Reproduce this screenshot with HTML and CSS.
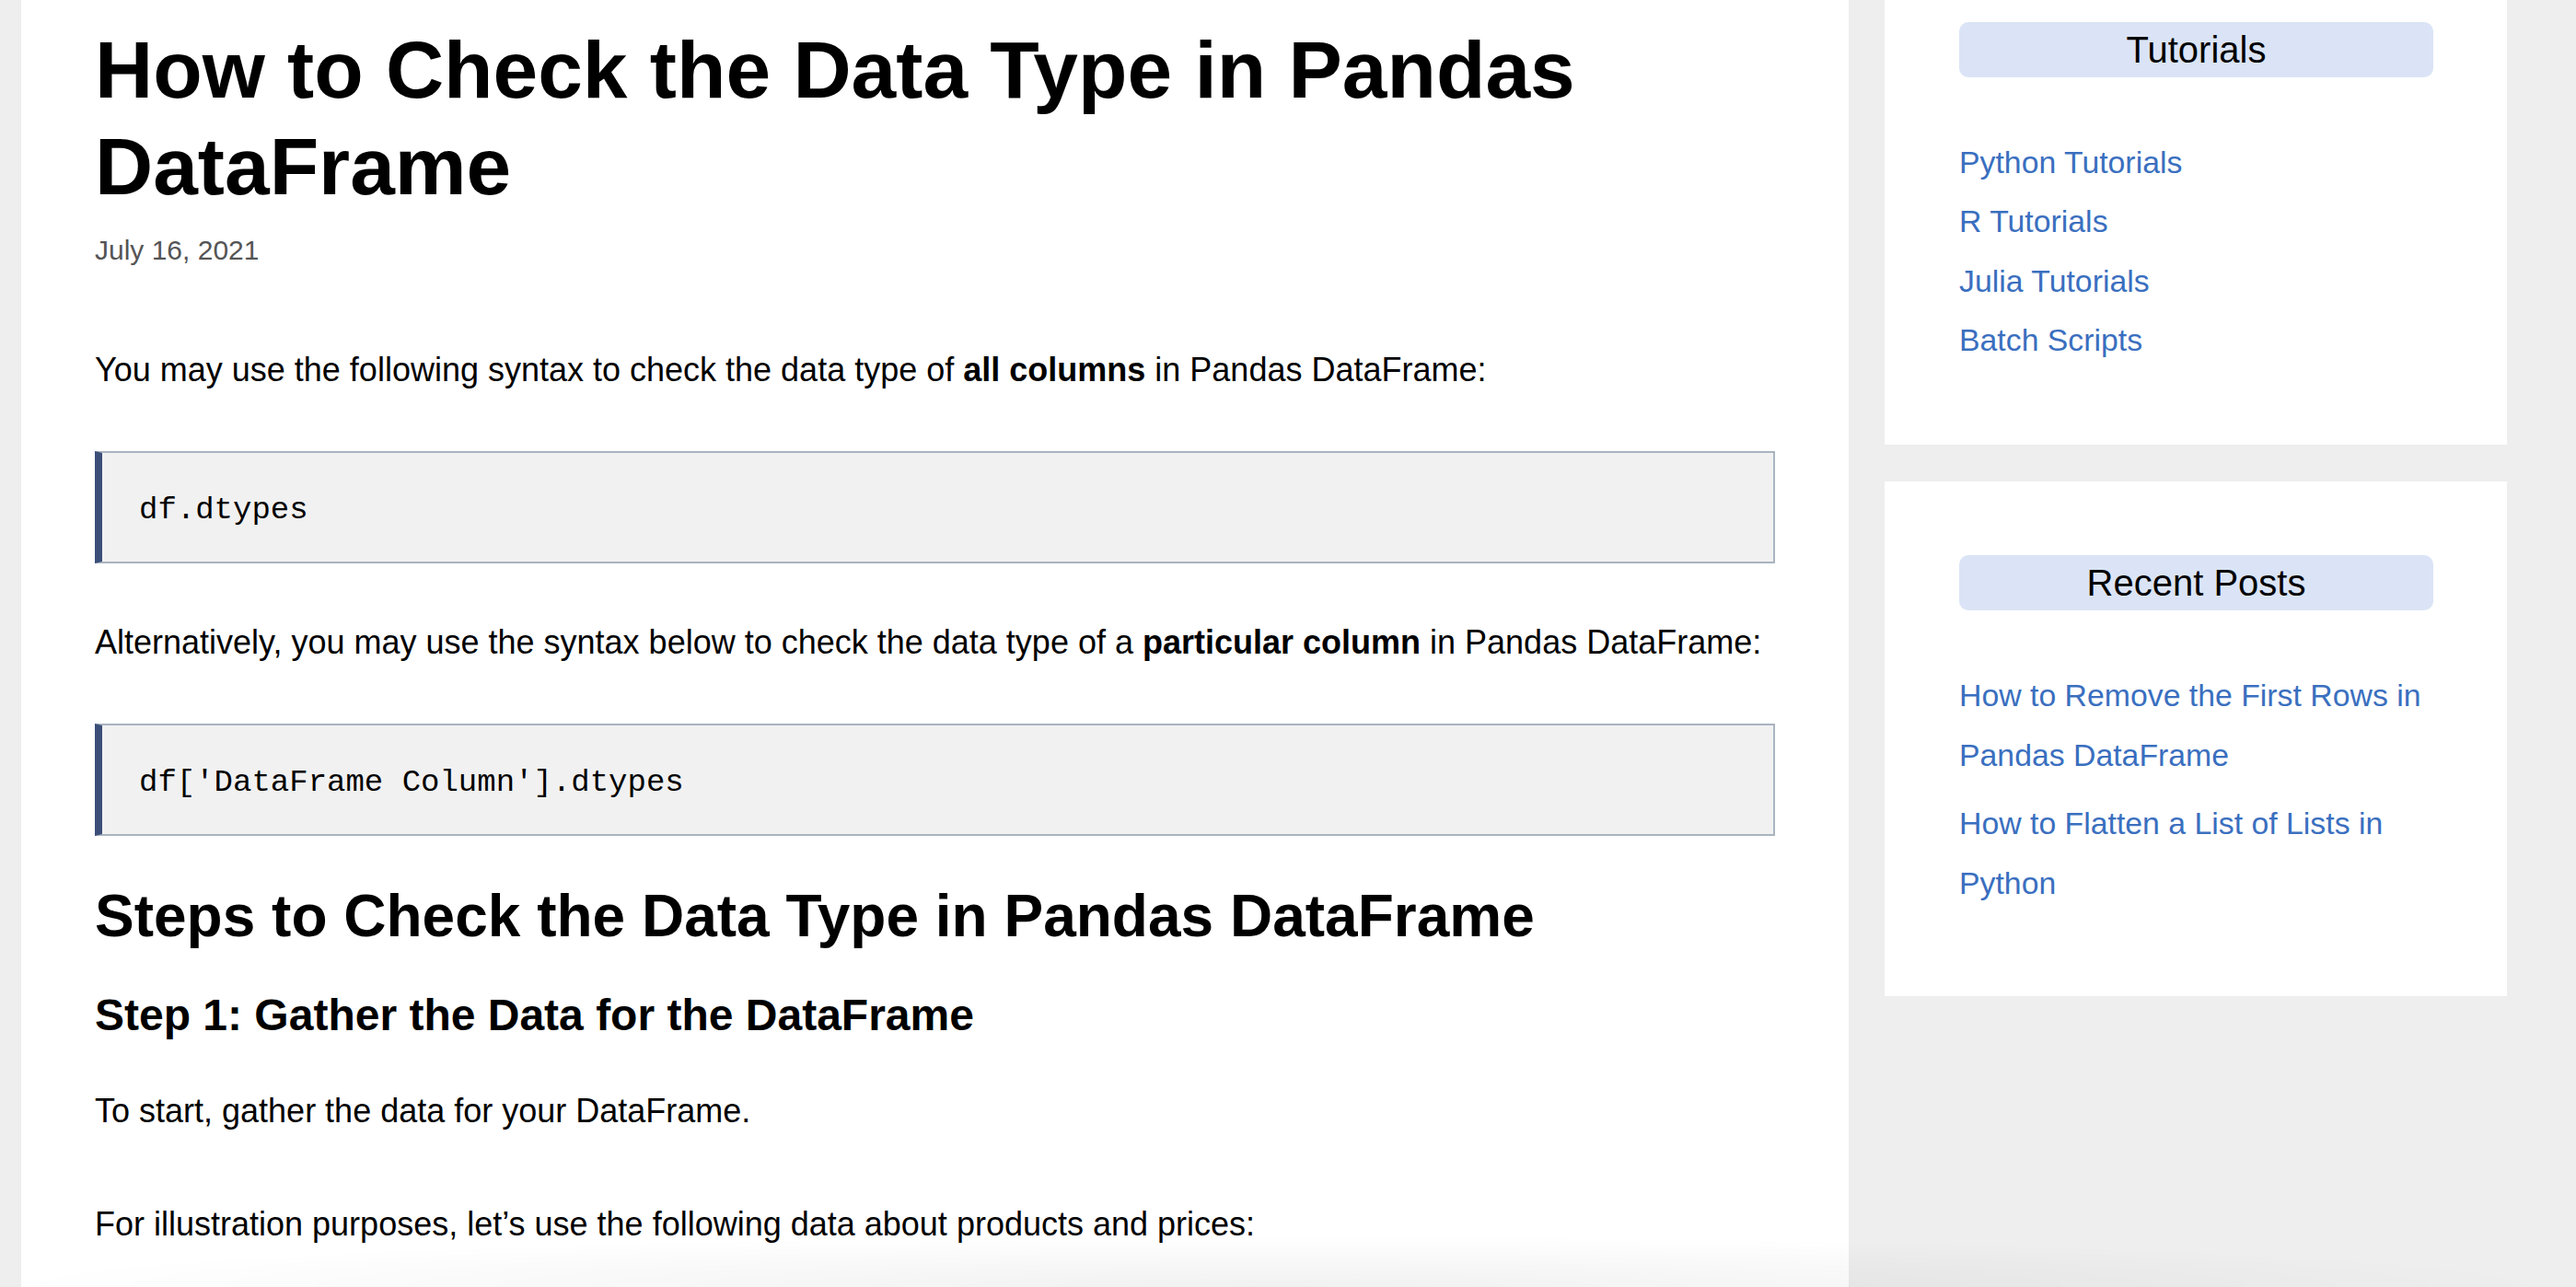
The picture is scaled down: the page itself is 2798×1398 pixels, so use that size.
FILE: index.html
```html
<!DOCTYPE html>
<html lang="en">
<head>
<meta charset="utf-8">
<title>How to Check the Data Type in Pandas DataFrame</title>
<link rel="stylesheet" href="styles.css">
</head>
<body>
<div class="page">
  <main class="main">
    <h1 class="title">How to Check the Data Type in Pandas DataFrame</h1>
    <div class="date">July 16, 2021</div>
    <p class="text">You may use the following syntax to check the data type of <strong>all columns</strong> in Pandas DataFrame:</p>
    <pre class="code">df.dtypes</pre>
    <p class="text">Alternatively, you may use the syntax below to check the data type of a <strong>particular column</strong> in Pandas DataFrame:</p>
    <pre class="code">df['DataFrame Column'].dtypes</pre>
    <h2 class="section">Steps to Check the Data Type in Pandas DataFrame</h2>
    <h3 class="step">Step 1: Gather the Data for the DataFrame</h3>
    <p class="text">To start, gather the data for your DataFrame.</p>
    <p class="text">For illustration purposes, let’s use the following data about products and prices:</p>
  </main>
  <aside class="sidebar">
    <section class="widget">
      <h2 class="widget-title">Tutorials</h2>
      <ul class="links links-short">
        <li><a href="#">Python Tutorials</a></li>
        <li><a href="#">R Tutorials</a></li>
        <li><a href="#">Julia Tutorials</a></li>
        <li><a href="#">Batch Scripts</a></li>
      </ul>
    </section>
    <section class="widget">
      <h2 class="widget-title">Recent Posts</h2>
      <ul class="links links-posts">
        <li><a href="#">How to Remove the First Rows in Pandas DataFrame</a></li>
        <li><a href="#">How to Flatten a List of Lists in Python</a></li>
      </ul>
    </section>
  </aside>
</div>
<div class="fade"></div>
</body>
</html>
```

FILE: styles.css
```css
html, body {
  margin: 0;
  padding: 0;
}

body {
  background: #eeeeee;
  font-family: "Liberation Sans", Arial, Helvetica, sans-serif;
  color: #000;
  overflow: hidden;
}

.page {
  display: flex;
  align-items: flex-start;
  margin-top: -56px;
  padding-left: 23px;
}

.main {
  width: 1985px;
  box-sizing: border-box;
  min-height: 1600px;
  background: #ffffff;
  padding: 80px 80px 80px 80px;
}

.title {
  margin: 0;
  font-size: 87.5px;
  line-height: 105px;
  font-weight: bold;
}

.date {
  margin-top: 15px;
  font-size: 30px;
  line-height: 45px;
  color: #555555;
}

.text {
  margin: 0;
  font-size: 36px;
  line-height: 57.6px;
}

.date + .text {
  margin-top: 79px;
}

.code {
  margin: 59.2px 0 0 0;
  background: #f1f1f1;
  border: 2px solid #a9b4c0;
  border-left: 8px solid #3b4f78;
  padding: 41px 40px 35px 40px;
  font-family: "Liberation Mono", "Courier New", monospace;
  font-size: 34px;
  line-height: 42px;
  color: #000;
}

.code + .text {
  margin-top: 57px;
}

.text + .text {
  margin-top: 65px;
}

.section {
  margin: 49.5px 0 0 0;
  font-size: 64px;
  line-height: 76.8px;
  font-weight: bold;
}

.step {
  margin: 40px 0 0 0;
  font-size: 48px;
  line-height: 57.6px;
  font-weight: bold;
}

.step + .text {
  margin-top: 47px;
}

.sidebar {
  width: 790px;
  box-sizing: border-box;
  padding-left: 39px;
  display: flex;
  flex-direction: column;
  gap: 40px;
}

.widget {
  width: 676px;
  box-sizing: border-box;
  background: #ffffff;
  padding: 80px 80px 81px 81px;
}

.widget-title {
  margin: 0;
  height: 60px;
  line-height: 60px;
  background: #dae4f6;
  border-radius: 10px;
  text-align: center;
  font-size: 40px;
  font-weight: normal;
  color: #000;
}

.links {
  list-style: none;
  margin: 60px 0 0 0;
  padding: 0;
  font-size: 33.8px;
}

.links a {
  color: #3a6fbf;
  text-decoration: none;
}

.links-short li {
  line-height: 64.4px;
}

.links-posts li {
  line-height: 65px;
  margin-bottom: 9px;
}

.fade {
  position: fixed;
  left: 0;
  right: 0;
  bottom: 0;
  height: 56px;
  pointer-events: none;
  background: radial-gradient(ellipse 1400px 56px at 1390px 100%, rgba(0, 0, 0, 0.055), rgba(0, 0, 0, 0) 100%);
}
```
